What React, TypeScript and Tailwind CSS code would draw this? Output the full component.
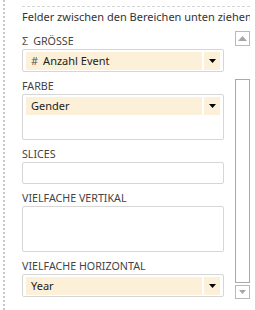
import React from "react";

function Caret({ color = "#000" }: { color?: string }) {
  return (
    <svg width="7" height="4" viewBox="0 0 7 4">
      <polygon points="0,0 7,0 3.5,4" fill={color} />
    </svg>
  );
}

function FieldItem({ label, hash }: { label: string; hash?: boolean }) {
  return (
    <div className="flex h-[18px] bg-[#fdf0d9]">
      <div className="flex-1 flex items-center pl-[5px] text-[11px] text-[#222] whitespace-nowrap">
        {hash && <span className="text-[#555] mr-[5px]">#</span>}
        {label}
      </div>
      <div className="w-[2px] bg-white" />
      <div className="w-[16px] flex items-center justify-center">
        <Caret />
      </div>
    </div>
  );
}

function Label({ children }: { children: React.ReactNode }) {
  return (
    <div className="h-[22px] pt-[7px] text-[10.7px] leading-[14px] text-[#444] whitespace-nowrap">
      {children}
    </div>
  );
}

function App() {
  return (
    <div className="w-[255px] h-[310px] bg-white flex overflow-hidden font-['Segoe_UI','Noto_Sans',sans-serif]">
      {/* dotted splitter */}
      <div className="ml-[3px] h-full border-l-2 border-dotted border-[#c8c8c8]" />

      <div className="flex-1 min-w-0 pl-[17px]">
        <div className="mt-[6px] mr-[5px] border-t border-dashed border-[#d4d4d4]" />
        <div className="h-[20px] leading-[20px] text-[11px] text-[#333] whitespace-nowrap overflow-hidden mr-[5px]">
          Felder zwischen den Bereichen unten ziehen
        </div>

        <div className="flex">
          {/* areas */}
          <div className="w-[202px]">
            <Label>
              <span className="mr-[5px] text-[#555]">Σ</span>GRÖSSE
            </Label>
            <div className="h-[23px] border border-[#d6d6d6] rounded-[2px] px-[3px] pt-[2px]">
              <FieldItem label="Anzahl Event" hash />
            </div>

            <Label>FARBE</Label>
            <div className="h-[46px] border border-[#d6d6d6] rounded-[2px] px-[3px] pt-[2px]">
              <FieldItem label="Gender" />
            </div>

            <Label>SLICES</Label>
            <div className="h-[22px] border border-[#d6d6d6] rounded-[2px]" />

            <Label>VIELFACHE VERTIKAL</Label>
            <div className="h-[46px] border border-[#d6d6d6] rounded-[2px]" />

            <Label>VIELFACHE HORIZONTAL</Label>
            <div className="h-[23px] border border-[#d6d6d6] rounded-[2px] px-[3px] pt-[2px]">
              <FieldItem label="Year" />
            </div>
          </div>

          {/* scrollbar */}
          <div className="ml-[11px] w-[15px] flex flex-col">
            <div className="mt-[4px] h-[15px] border border-[#b9b9b9] flex items-center justify-center">
              <svg width="9" height="5" viewBox="0 0 9 5">
                <polygon points="0,5 9,5 4.5,0" fill="#a6a6a6" />
              </svg>
            </div>
            <div className="mt-[33px] h-[204px] border border-[#a9a9a9] bg-white" />
            <div className="mt-[2px] h-[14px] border border-[#b9b9b9] flex items-center justify-center">
              <Caret color="#a6a6a6" />
            </div>
          </div>
        </div>
      </div>
    </div>
  );
}

export default App;
